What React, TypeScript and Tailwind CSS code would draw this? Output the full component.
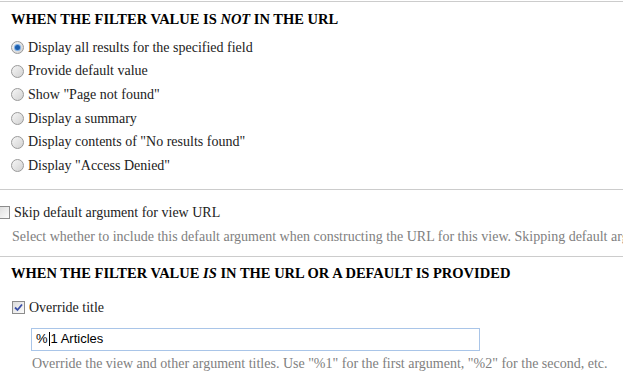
import React from "react";

const serif = { fontFamily: '"Liberation Serif", "DejaVu Serif", serif' };

function Radio({ checked }: { checked?: boolean }) {
  return (
    <span className="relative inline-flex h-[13px] w-[13px] shrink-0 items-center justify-center rounded-full border border-[#9a9a9a] bg-gradient-to-br from-[#f6f6f6] to-[#d2d2d2]">
      {checked ? (
        <span className="h-[5px] w-[5px] rounded-full bg-[#1d5fae] shadow-[0_0_0_1px_#7fb0e6]" />
      ) : null}
    </span>
  );
}

function Check({ checked }: { checked?: boolean }) {
  return (
    <span className="inline-flex h-[13px] w-[13px] shrink-0 items-center justify-center border border-[#8c8c8c] bg-gradient-to-br from-[#dcdcdc] to-[#fbfbfb]">
      {checked ? (
        <svg width="9" height="9" viewBox="0 0 9 9">
          <path d="M1 4.5 L3.5 7 L8 1.5" fill="none" stroke="#3a4fa8" strokeWidth="1.8" />
        </svg>
      ) : null}
    </span>
  );
}

const options = [
  "Display all results for the specified field",
  "Provide default value",
  'Show "Page not found"',
  "Display a summary",
  'Display contents of "No results found"',
  'Display "Access Denied"',
];

export default function App() {
  return (
    <div className="w-[623px] h-[377px] overflow-hidden bg-white text-[14px] leading-4 text-[#222]" style={serif}>
      <div className="mt-px border-t border-[#cccccc]">
        <h2 className="whitespace-nowrap pl-[11px] pt-[9px] text-[14.5px] font-bold leading-4 text-black">
          WHEN THE FILTER VALUE IS <em>NOT</em> IN THE URL
        </h2>
        <div className="mt-[9px] pl-[11px]">
          {options.map((o, i) => (
            <label key={i} className="flex h-[23.6px] items-center gap-[4px]">
              <Radio checked={i === 0} />
              <span>{o}</span>
            </label>
          ))}
        </div>
      </div>

      <div className="mt-[11px] border-t border-[#cccccc]">
        <label className="-ml-[3px] mt-[15px] flex h-4 items-center gap-[4px]">
          <Check />
          <span>Skip default argument for view URL</span>
        </label>
        <p className="mt-[8px] whitespace-nowrap pl-[12px] text-[#808080]">
          Select whether to include this default argument when constructing the URL for this view. Skipping default argument
        </p>
      </div>

      <div className="mt-[11px] border-t border-[#cccccc]">
        <h2 className="whitespace-nowrap pl-[11px] pt-[8px] text-[14.5px] font-bold leading-4 text-black">
          WHEN THE FILTER VALUE <em>IS</em> IN THE URL OR A DEFAULT IS PROVIDED
        </h2>
        <label className="mt-[19px] flex h-4 items-center gap-[4px] pl-[12px]">
          <Check checked />
          <span>Override title</span>
        </label>
        <div className="mt-[12px] pl-[31px]">
          <div
            className="flex h-[23px] w-[449px] items-center border border-[#a9c5e8] pl-[4px] text-[13px] text-black"
            style={{ fontFamily: '"Liberation Sans", Arial, sans-serif' }}
          >
            %<span className="mx-px inline-block h-[14px] w-px bg-black" />1 Articles
          </div>
        </div>
        <p className="mt-[5px] whitespace-nowrap pl-[32px] text-[#808080]">
          Override the view and other argument titles. Use "%1" for the first argument, "%2" for the second, etc.
        </p>
      </div>
    </div>
  );
}
